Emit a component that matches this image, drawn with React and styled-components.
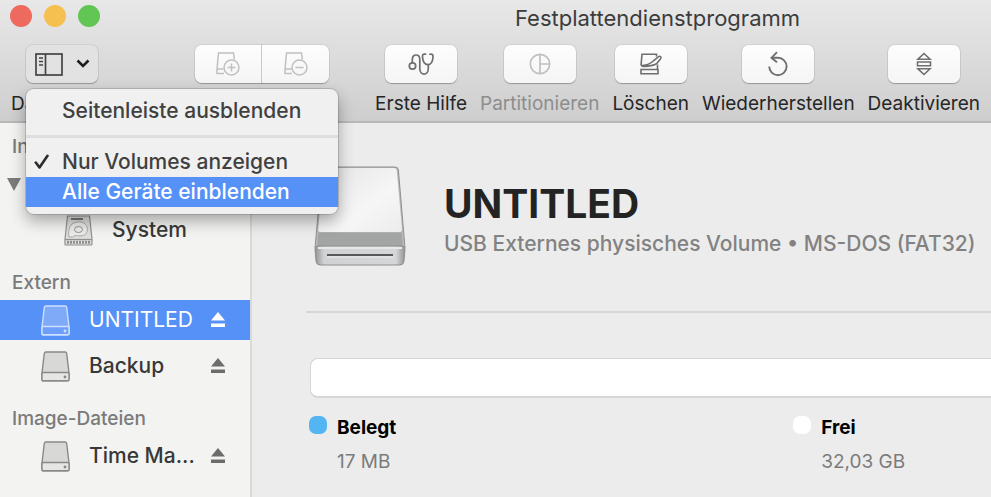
import React, { useState } from 'react';
import styled, { createGlobalStyle } from 'styled-components';

const GlobalStyle = createGlobalStyle`
  * {
    box-sizing: border-box;
  }

  body {
    margin: 0;
    background: #ececec;
    font-family: Inter, Roboto, 'Liberation Sans', sans-serif;
    color: #262626;
  }

  button {
    font: inherit;
    color: inherit;
    border: 0;
    padding: 0;
    background: none;
  }

  svg {
    display: block;
    flex-shrink: 0;
  }
`;

const SidebarIcon = () => (
  <svg width="28" height="23" viewBox="0 0 28 23" fill="none" stroke="#444" strokeWidth="1.700">
    <rect x="1" y="1" width="26" height="21" />
    <path d="M10.500 1v21" />
    <path d="M4 5h4M4 8.500h4M4 12h4" strokeWidth="1.400" />
  </svg>
);

const ChevronIcon = () => (
  <svg width="14" height="10" viewBox="0 0 14 10" fill="none" stroke="#1e1e1e" strokeWidth="2.600">
    <path d="M1.500 1.500L7 7l5.500-5.500" />
  </svg>
);

const VolumeIcon = ({ minus }) => (
  <svg width="24" height="24" viewBox="0 0 24 24" fill="none" stroke="#c0c0c0" strokeWidth="1.500">
    <path d="M8 21.500H1V17L2.500 1h15l.9 6.500M1 17h6.500" />
    <circle cx="15.500" cy="15.500" r="7.500" />
    <path d={minus ? 'M11.500 15.500h8' : 'M11.500 15.500h8M15.500 11.500v8'} />
  </svg>
);

const StethoscopeIcon = () => (
  <svg width="26" height="24" viewBox="0 0 26 24" fill="none" stroke="#6f6f6f" strokeWidth="1.700" strokeLinecap="round">
    <circle cx="4.500" cy="14" r="3.200" />
    <path d="M4.300 10.500V7.500c0-6 7.500-6 7.500 0v9c0 7.500 8.500 7.500 8.500 0v-3.500" />
    <path d="M17.500 2.200c-2.500-.6-3.200.8-3 3 .4 4 2.200 7.500 5.300 7.500s4.900-3.500 5.200-7.500c.2-2.200-.7-3.600-3.100-3" />
  </svg>
);

const PieIcon = () => (
  <svg width="22" height="22" viewBox="0 0 22 22" fill="none" stroke="#c0c0c0" strokeWidth="1.700">
    <circle cx="11" cy="11" r="9.700" />
    <path d="M11 1.300v19.400M11 11h9.700" />
  </svg>
);

const EraseIcon = () => (
  <svg width="24" height="22" viewBox="0 0 24 22" fill="none" stroke="#6f6f6f" strokeWidth="1.600">
    <path d="M17.500 3.500V1.300H3L2 12.500M18.500 11.500v5" />
    <path d="M2 12.600c5.500 0 9.500-1.800 12.500-4.800l5-4.200q1.400-.8 2.200.2t-.3 2.300L17.500 10.800c-3.500 2-8 2.700-14.500 2.500" />
    <path d="M2 16.500h17v4.200H2z" />
  </svg>
);

const RestoreIcon = () => (
  <svg width="22" height="26" viewBox="0 0 22 26" fill="none" stroke="#6f6f6f" strokeWidth="1.900">
    <path d="M2.200 15.500a8.700 8.700 0 1 0 8.700-8.700H5" />
    <path d="M10 1.200L4.500 6.800l5.500 4.400" />
  </svg>
);

const UnmountIcon = () => (
  <svg width="16" height="24" viewBox="0 0 16 24" fill="none" stroke="#6f6f6f" strokeWidth="1.600">
    <path d="M2 7.200L8 1.500l6 5.700zM1.500 10h13v3.800h-13zM2 16.800l6 5.700 6-5.700z" />
  </svg>
);

const CheckIcon = () => (
  <svg width="16" height="16" viewBox="0 0 16 16" fill="none" stroke="#2c2c2c" strokeWidth="2.600" strokeLinecap="round" strokeLinejoin="round">
    <path d="M1.800 8.500L5.500 13.500 13.500 1.800" />
  </svg>
);

const EjectIcon = () => (
  <svg width="14" height="16" viewBox="0 0 14 16" fill="currentColor">
    <path d="M7 0l7 8.500H0zM0 11.500h14V15H0z" />
  </svg>
);

const DriveIcon = ({ selected }) => {
  const line = selected ? '#cfe0ff' : '#898989';
  return (
    <svg width="29" height="31" viewBox="0 0 29 31" stroke={line} strokeWidth="1.400">
      <path d="M5 1h19q1.500 0 1.700 1.500L28 22v6.500q0 1.300-1.300 1.300H2.300Q1 29.800 1 28.500V22L3.300 2.500Q3.500 1 5 1z" fill={selected ? '#7faaf8' : '#d8d8d6'} />
      <path d="M1 22.500q0-1 1-1h25q1 0 1 1v6q0 1.300-1.300 1.300H2.300Q1 29.800 1 28.500z" fill={selected ? '#6e9ff8' : '#e6e6e4'} />
      <circle cx="24" cy="26" r=".7" fill={line} />
    </svg>
  );
};

const HardDiskIcon = () => (
  <svg width="29" height="31" viewBox="0 0 29 31" fill="none" stroke="#909090" strokeWidth="1.200">
    <path d="M3.500 1h22L28 24v5q0 1-1 1H2q-1 0-1-1v-5z" fill="#dededc" />
    <path d="M7 4h12" stroke="#777" strokeWidth="2" />
    <path d="M5 22c-1-5 0-10 3-13q6-4 12-1c4 3 4.500 8 1.500 11-3 2.500-6 2-9 1.500q-3 .2-4 1.500z" fill="#ececea" stroke="#aaa" strokeWidth="1" />
    <ellipse cx="14.500" cy="14.500" rx="4" ry="3" strokeWidth="1" />
    <path d="M1 24.500h27" />
    <path d="M3 27.300h23" strokeWidth="3" strokeDasharray="2 1" />
  </svg>
);

const UsbDriveIcon = () => (
  <svg width="92" height="100" viewBox="0 0 92 100">
    <defs>
      <linearGradient id="lid" x1="0" y1="0" x2="1" y2="1">
        <stop offset="0" stopColor="#e4e4e4" />
        <stop offset=".6" stopColor="#f6f6f6" />
        <stop offset="1" stopColor="#ececec" />
      </linearGradient>
      <linearGradient id="front" x1="0" y1="0" x2="1" y2="0">
        <stop offset="0" stopColor="#8f9192" />
        <stop offset=".1" stopColor="#d0d2d4" />
        <stop offset=".9" stopColor="#d4d6d8" />
        <stop offset="1" stopColor="#8f9192" />
      </linearGradient>
    </defs>
    <path d="M8 4q.5-3 3-3h70q3 0 3.400 3L91 82H1z" fill="#b9bbbb" stroke="#8e9090" />
    <path d="M9.500 4q.3-2 2.500-2h68q2.300 0 2.700 2L88 63q.2 3-2.500 3h-79Q4 66 4.300 63z" fill="url(#lid)" />
    <path d="M4.500 66.500h83l1.500 14H3z" fill="#a3a5a5" />
    <path d="M1 83q0-3 3-3h84q3 0 3 3l-1 12q-.4 4-4 4H6q-3.600 0-4-4z" fill="url(#front)" stroke="#8c8e90" />
    <path d="M4 82h84" stroke="#e6e8e9" strokeWidth="2" />
    <path d="M13 89h66" stroke="#56595b" strokeWidth="2" />
    <path d="M13 91h66" stroke="#eceded" />
  </svg>
);

const Window = styled.div`
  min-height: 100vh;
  display: flex;
  flex-direction: column;
  overflow: hidden;
`;

const Header = styled.header`
  background: linear-gradient(#e8e8e8, #cecece);
  border-bottom: 2px solid #b8b8b8;
`;

const TitleBar = styled.div`
  display: grid;
  grid-template-columns: 314px 1fr;
  align-items: center;
  height: 36px;
  padding-left: 10px;
`;

const Lights = styled.div`
  display: flex;
  gap: 12px;
  height: 32px;
  align-items: center;
  align-self: start;
`;

const Light = styled.button`
  width: 22px;
  height: 22px;
  border-radius: 50%;
  background: ${(props) => props.$color};
`;

const WindowTitle = styled.h1`
  margin: 0;
  font-size: 22px;
  font-weight: 400;
  line-height: 36px;
  text-align: center;
  color: #3c3c3c;
`;

const Toolbar = styled.div`
  display: flex;
  align-items: flex-start;
  gap: 13px;
  padding: 9px 11px 5px;
`;

const ToolItem = styled.div`
  display: flex;
  flex-direction: column;
  align-items: center;
  gap: 9px;
`;

const ToolLabel = styled.label`
  font-size: 19px;
  line-height: 24px;
  white-space: nowrap;
  color: ${(props) => (props.$disabled ? '#8d8d8d' : '#262626')};
`;

const ToolButton = styled.button`
  display: flex;
  align-items: center;
  justify-content: center;
  gap: 13px;
  width: 72px;
  height: 38px;
  border-radius: 7px;
  background: ${(props) => (props.$plain ? '#e2e2e2' : 'linear-gradient(#fdfdfd, #f5f5f5)')};
  box-shadow: 0 0 0 1px rgba(0, 0, 0, 0.06), 0 1px 1px rgba(0, 0, 0, 0.25);
`;

const VolumeGroup = styled.div`
  display: flex;
  margin: 0 auto 0 69px;

  button {
    width: 67px;
  }

  button:first-child {
    border-radius: 7px 0 0 7px;
    border-right: 1px solid #dcdcdc;
  }

  button:last-child {
    border-radius: 0 7px 7px 0;
  }
`;

const MenuAnchor = styled.div`
  position: relative;
`;

const Menu = styled.div`
  position: absolute;
  top: calc(100% + 6px);
  left: 0;
  z-index: 10;
  width: 312px;
  padding: 7px 0;
  border-radius: 8px;
  background: #f0f0f0;
  box-shadow: 0 0 0 1px rgba(0, 0, 0, 0.14), 0 7px 16px rgba(0, 0, 0, 0.32);
`;

const MenuItem = styled.button`
  display: grid;
  grid-template-columns: 28px 1fr;
  align-items: center;
  width: 100%;
  height: 30px;
  padding-left: 8px;
  font-size: 21px;
  font-weight: 500;
  line-height: 30px;
  text-align: left;
  white-space: nowrap;
  color: ${(props) => (props.$active ? '#fff' : '#404040')};
  background: ${(props) => (props.$active ? '#5691f8' : 'none')};
`;

const MenuDivider = styled.hr`
  height: 3px;
  margin: 9px 0;
  border: 0;
  background: #dedede;
`;

const Body = styled.div`
  flex: 1;
  display: grid;
  grid-template-columns: 252px minmax(0, 1fr);
`;

const Sidebar = styled.nav`
  display: flex;
  flex-direction: column;
  gap: 16px;
  padding-top: 7px;
  background: #f3f3f1;
  border-right: 2px solid #d9d9d9;
`;

const SectionTitle = styled.h2`
  margin: 0;
  padding-left: 12px;
  font-size: 19px;
  font-weight: 500;
  line-height: 34px;
  color: #7a7a7a;
`;

const VolumeList = styled.div`
  display: flex;
  flex-direction: column;
  gap: 6px;
`;

const VolumeRow = styled.div`
  display: flex;
  align-items: center;
  height: 40px;
  padding: 0 25px 0 ${(props) => (props.$nested ? 64 : 41)}px;
  color: ${(props) => (props.$selected ? '#fff' : '#383838')};
  font-weight: ${(props) => (props.$selected ? 400 : 500)};
  background: ${(props) => (props.$selected ? '#5691f8' : 'none')};
`;

const VolumeName = styled.button`
  flex: 1;
  display: flex;
  align-items: center;
  gap: 19px;
  font-size: 21px;
  line-height: 28px;
  white-space: nowrap;
`;

const EjectButton = styled.button`
  color: ${(props) => (props.$selected ? '#fff' : '#6c6c6c')};
`;

const Disclosure = styled.button`
  margin-left: 7px;
  border: 7px solid transparent;
  border-top: 13px solid #7b7b7b;
  border-bottom: 0;
`;

const DisclosureRow = styled.div`
  display: flex;
  align-items: center;
  height: 40px;
`;

const Main = styled.main`
  padding: 43px 0 0 54px;
`;

const Summary = styled.section`
  display: flex;
  gap: 38px;
  padding: 0 0 45px 8px;
  border-bottom: 2px solid #d6d6d6;
`;

const VolumeTitle = styled.h2`
  margin: 13px 0 0;
  font-size: 39px;
  font-weight: 700;
  line-height: 50px;
  color: #232323;
`;

const VolumeInfo = styled.p`
  margin: 0;
  font-size: 21px;
  font-weight: 500;
  line-height: 30px;
  white-space: nowrap;
  color: #828282;
`;

const UsageBar = styled.div`
  height: 40px;
  margin: 45px 0 0 4px;
  border: 1px solid #d6d6d6;
  border-right: 0;
  border-bottom-width: 2px;
  border-radius: 8px 0 0 8px;
  background: #fff;
`;

const Legend = styled.dl`
  display: grid;
  grid-template-columns: 71% auto;
  margin: 18px 0 0 3px;
`;

const LegendItem = styled.div`
  display: grid;
  grid-template-columns: 18px auto;
  column-gap: 10px;
  row-gap: 10px;
  justify-content: start;
`;

const Swatch = styled.span`
  width: 18px;
  height: 18px;
  border-radius: 7px;
  background: ${(props) => props.$color};
`;

const LegendName = styled.dt`
  font-size: 19px;
  font-weight: 700;
  line-height: 24px;
  color: #000;
`;

const LegendValue = styled.dd`
  grid-column: 2;
  margin: 0;
  font-size: 19px;
  line-height: 24px;
  color: #7b7b7b;
`;

const tools = [
  { id: 'firstaid', label: 'Erste Hilfe', icon: <StethoscopeIcon /> },
  { id: 'partition', label: 'Partitionieren', icon: <PieIcon />, disabled: true },
  { id: 'erase', label: 'Löschen', icon: <EraseIcon /> },
  { id: 'restore', label: 'Wiederherstellen', icon: <RestoreIcon /> },
  { id: 'unmount', label: 'Deaktivieren', icon: <UnmountIcon /> },
];

const lights = [
  { name: 'Schließen', color: '#ee6a5f' },
  { name: 'Minimieren', color: '#f5c04f' },
  { name: 'Vergrößern', color: '#62c655' },
];

const Volume = ({ name, selected, onSelect }) => (
  <VolumeRow $selected={selected}>
    <VolumeName onClick={() => onSelect(name)}>
      <DriveIcon selected={selected} />
      {name}
    </VolumeName>
    <EjectButton $selected={selected} aria-label={`${name} auswerfen`}>
      <EjectIcon />
    </EjectButton>
  </VolumeRow>
);

const App = () => {
  const [menuOpen, setMenuOpen] = useState(true);
  const [current, setCurrent] = useState('UNTITLED');

  return (
    <Window>
      <GlobalStyle />
      <Header>
        <TitleBar>
          <Lights>
            {lights.map((light) => (
              <Light key={light.name} $color={light.color} aria-label={light.name} />
            ))}
          </Lights>
          <WindowTitle>Festplattendienstprogramm</WindowTitle>
        </TitleBar>
        <Toolbar>
          <ToolItem>
            <MenuAnchor>
              <ToolButton id="view" $plain aria-expanded={menuOpen} onClick={() => setMenuOpen(!menuOpen)}>
                <SidebarIcon />
                <ChevronIcon />
              </ToolButton>
              {menuOpen && (
                <Menu role="menu">
                  <MenuItem role="menuitem"><span />Seitenleiste ausblenden</MenuItem>
                  <MenuDivider />
                  <MenuItem role="menuitem"><CheckIcon />Nur Volumes anzeigen</MenuItem>
                  <MenuItem role="menuitem" $active><span />Alle Geräte einblenden</MenuItem>
                </Menu>
              )}
            </MenuAnchor>
            <ToolLabel htmlFor="view">Darstellung</ToolLabel>
          </ToolItem>
          <VolumeGroup>
            <ToolButton disabled aria-label="Volume hinzufügen"><VolumeIcon /></ToolButton>
            <ToolButton disabled aria-label="Volume entfernen"><VolumeIcon minus /></ToolButton>
          </VolumeGroup>
          {tools.map((tool) => (
            <ToolItem key={tool.id}>
              <ToolButton id={tool.id} disabled={tool.disabled}>{tool.icon}</ToolButton>
              <ToolLabel htmlFor={tool.id} $disabled={tool.disabled}>{tool.label}</ToolLabel>
            </ToolItem>
          ))}
        </Toolbar>
      </Header>
      <Body>
        <Sidebar>
          <section>
            <SectionTitle>Intern</SectionTitle>
            <VolumeList>
              <DisclosureRow>
                <Disclosure aria-label="Interne Volumes" />
              </DisclosureRow>
              <VolumeRow $nested>
                <VolumeName>
                  <HardDiskIcon />
                  System
                </VolumeName>
              </VolumeRow>
            </VolumeList>
          </section>
          <section>
            <SectionTitle>Extern</SectionTitle>
            <VolumeList>
              <Volume name="UNTITLED" selected={current === 'UNTITLED'} onSelect={setCurrent} />
              <Volume name="Backup" selected={current === 'Backup'} onSelect={setCurrent} />
            </VolumeList>
          </section>
          <section>
            <SectionTitle>Image-Dateien</SectionTitle>
            <VolumeList>
              <Volume name="Time Ma..." selected={current === 'Time Ma...'} onSelect={setCurrent} />
            </VolumeList>
          </section>
        </Sidebar>
        <Main>
          <Summary>
            <UsbDriveIcon />
            <div>
              <VolumeTitle>UNTITLED</VolumeTitle>
              <VolumeInfo>USB Externes physisches Volume • MS-DOS (FAT32)</VolumeInfo>
            </div>
          </Summary>
          <UsageBar />
          <Legend>
            <LegendItem>
              <Swatch $color="#54b5f3" />
              <LegendName>Belegt</LegendName>
              <LegendValue>17 MB</LegendValue>
            </LegendItem>
            <LegendItem>
              <Swatch $color="#fff" />
              <LegendName>Frei</LegendName>
              <LegendValue>32,03 GB</LegendValue>
            </LegendItem>
          </Legend>
        </Main>
      </Body>
    </Window>
  );
};

export default App;
